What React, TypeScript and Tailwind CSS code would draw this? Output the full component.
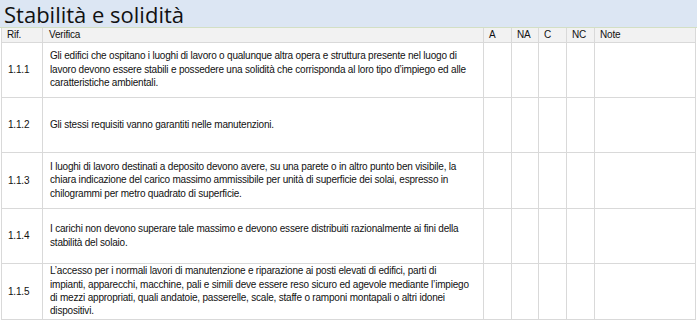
import React from "react";

type Row = { rif: string; lines: string[]; h: string };

const rows: Row[] = [
  {
    rif: "1.1.1",
    h: "h-[55px]",
    lines: [
      "Gli edifici che ospitano i luoghi di lavoro o qualunque altra opera e struttura presente nel luogo di",
      "lavoro devono essere stabili e possedere una solidità che corrisponda al loro tipo d’impiego ed alle",
      "caratteristiche ambientali.",
    ],
  },
  {
    rif: "1.1.2",
    h: "h-[55px]",
    lines: ["Gli stessi requisiti vanno garantiti nelle manutenzioni."],
  },
  {
    rif: "1.1.3",
    h: "h-[56px]",
    lines: [
      "I luoghi di lavoro destinati a deposito devono avere, su una parete o in altro punto ben visibile, la",
      "chiara indicazione del carico massimo ammissibile per unità di superficie dei solai, espresso in",
      "chilogrammi per metro quadrato di superficie.",
    ],
  },
  {
    rif: "1.1.4",
    h: "h-[55px]",
    lines: [
      "I carichi non devono superare tale massimo e devono essere distribuiti razionalmente ai fini della",
      "stabilità del solaio.",
    ],
  },
  {
    rif: "1.1.5",
    h: "h-[56px]",
    lines: [
      "L’accesso per i normali lavori di manutenzione e riparazione ai posti elevati di edifici, parti di",
      "impianti, apparecchi, macchine, pali e simili deve essere reso sicuro ed agevole mediante l’impiego",
      "di mezzi appropriati, quali andatoie, passerelle, scale, staffe o ramponi montapali o altri idonei",
      "dispositivi.",
    ],
  },
];

const cell = "border border-[#d9d9d9] p-0 align-middle";

export default function App() {
  return (
    <div className="w-[697px] bg-white text-[#111] font-['Liberation_Sans',Arial,sans-serif] text-[10px] tracking-[-0.2px]">
      <div className="h-[28px] bg-[#dce6f3] border-b border-[#d3dfc4] pl-[4px] font-['Open_Sans',sans-serif] text-[22px] leading-[28px] tracking-normal text-[#111]">
        Stabilità e solidità
      </div>
      <table className="ml-px w-[695px] table-fixed border-collapse">
        <colgroup>
          <col className="w-[41px]" />
          <col className="w-[441px]" />
          <col className="w-[28px]" />
          <col className="w-[27px]" />
          <col className="w-[28px]" />
          <col className="w-[28px]" />
          <col />
        </colgroup>
        <thead>
          <tr className="h-[14px] bg-[#f2f2f2] leading-[13px]">
            <th className={`${cell} border-t-0 pl-[5px] text-left font-normal`}>Rif.</th>
            <th className={`${cell} border-t-0 pl-[6px] text-left font-normal`}>Verifica</th>
            <th className={`${cell} border-t-0 pl-[5px] text-left font-normal`}>A</th>
            <th className={`${cell} border-t-0 pl-[5px] text-left font-normal`}>NA</th>
            <th className={`${cell} border-t-0 pl-[5px] text-left font-normal`}>C</th>
            <th className={`${cell} border-t-0 pl-[5px] text-left font-normal`}>NC</th>
            <th className={`${cell} border-t-0 pl-[5px] text-left font-normal`}>Note</th>
          </tr>
        </thead>
        <tbody>
          {rows.map((r) => (
            <tr key={r.rif} className={r.h}>
              <td className={`${cell} pl-[6px]`}>{r.rif}</td>
              <td className={`${cell} pl-[7px] leading-[13.4px]`}>
                {r.lines.map((l, i) => (
                  <span key={i} className="block whitespace-nowrap">
                    {l}
                  </span>
                ))}
              </td>
              <td className={cell}></td>
              <td className={cell}></td>
              <td className={cell}></td>
              <td className={cell}></td>
              <td className={cell}></td>
            </tr>
          ))}
        </tbody>
      </table>
    </div>
  );
}
